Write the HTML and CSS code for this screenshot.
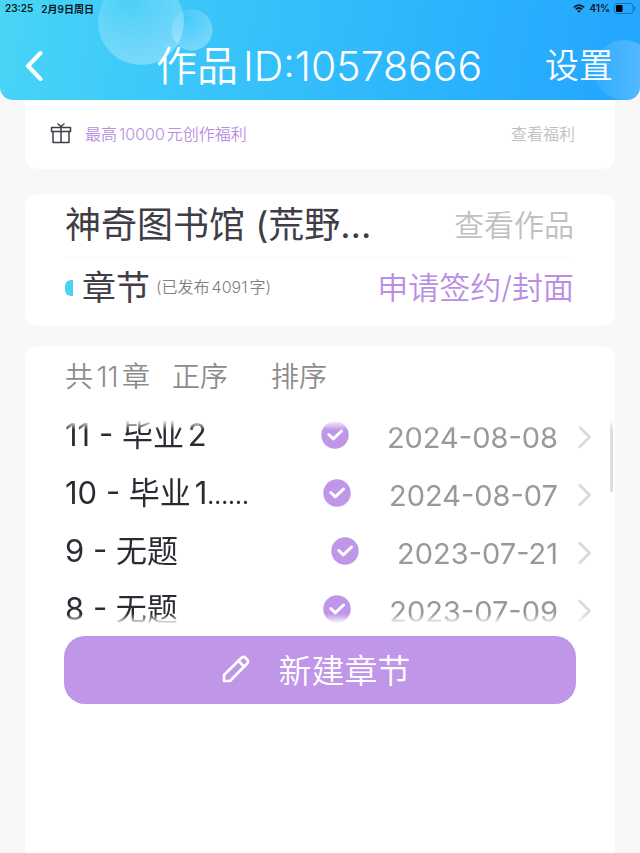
FILE: index.html
```html
<!DOCTYPE html>
<html lang="zh-CN">
<head>
<meta charset="utf-8">
<meta name="viewport" content="width=device-width, initial-scale=1">
<title>作品ID:10578666</title>
<link rel="stylesheet" href="styles.css">
</head>
<body>
<svg class="defs" aria-hidden="true">
  <symbol id="check" viewBox="0 0 28 28"><circle cx="14" cy="14" r="13.7" fill="#bf96e8"/><path d="M7.800 13.500l4.500 4.300 8.200-7.800" fill="none" stroke="#fff" stroke-width="3" stroke-linecap="round" stroke-linejoin="round"/></symbol>
  <symbol id="chevron" viewBox="0 0 14 24"><path d="M1 1.500L11.500 12 1 22.500" fill="none" stroke="#dadada" stroke-width="2.800" stroke-linejoin="round"/></symbol>
</svg>
<header class="top">
  <svg class="bubbles bubbles-left" viewBox="0 0 116 66" aria-hidden="true">
    <defs>
      <radialGradient id="b1" cx=".35" cy=".2" r=".85"><stop offset="0" stop-color="#fff" stop-opacity=".06"/><stop offset="1" stop-color="#fff" stop-opacity=".32"/></radialGradient>
    </defs>
    <circle cx="43" cy="22" r="43" fill="url(#b1)"/><circle cx="94" cy="30" r="20.500" fill="url(#b1)"/>
  </svg>
  <svg class="bubbles bubbles-right" viewBox="0 0 46 60" aria-hidden="true">
    <defs><linearGradient id="b2" x2="1" y2="0"><stop offset="0" stop-color="#fff" stop-opacity=".06"/><stop offset="1" stop-color="#fff" stop-opacity=".26"/></linearGradient></defs>
    <circle cx="30" cy="30" r="30" fill="url(#b2)"/>
  </svg>
  <div class="status">
    <span>23:25</span><span>2月9日周日</span>
    <svg class="wifi" viewBox="0 0 12 9" aria-label="Wi-Fi"><path d="M.800 3.400Q6-1.200 11.200 3.400M2.700 5.400Q6 2.600 9.300 5.400" fill="none" stroke="#0b1820" stroke-width="1.700"/><path d="M4.200 6.900Q6 5.600 7.800 6.900L6 8.800z" fill="#0b1820"/></svg>
    <span class="percent">41%</span>
    <svg class="battery" viewBox="0 0 22 11" aria-label="电量"><rect x=".5" y=".5" width="18.500" height="10" rx="2.500" fill="none" stroke="#1765a0" stroke-opacity=".75"/><rect x="2" y="2" width="6.500" height="7" rx="1" fill="#000"/><path d="M20.500 4v3" stroke="#1765a0" stroke-linecap="round"/></svg>
  </div>
  <nav class="bar">
    <button class="back" type="button" aria-label="返回"><svg viewBox="0 0 18 32"><path d="M15.500 3L3 16l12.500 13" fill="none" stroke="#fff" stroke-width="4" stroke-linecap="round" stroke-linejoin="round"/></svg></button>
    <h1>作品ID:10578666</h1>
    <button class="settings" type="button">设置</button>
  </nav>
</header>
<main>
  <section class="card benefit">
    <svg class="gift" viewBox="0 0 22 22" fill="none" stroke="#3f3e46" stroke-width="1.500" stroke-linejoin="round" stroke-linecap="round" aria-hidden="true"><rect x="1.500" y="5.500" width="19" height="4"/><path d="M3 9.500v11h16v-11M11 5.500v15M8 2L11 4.500l3-2.500"/></svg>
    <span class="benefit-text">最高10000元创作福利</span>
    <a class="more" href="#benefit">查看福利</a>
  </section>
  <section class="card work">
    <div class="work-row">
      <h2 class="book">神奇图书馆 (荒野…</h2>
      <a class="view" href="#work">查看作品</a>
    </div>
    <div class="work-row second">
      <i class="mark"></i>
      <h2>章节</h2>
      <span class="words">(已发布4091字)</span>
      <a class="apply" href="#apply">申请签约/封面</a>
    </div>
  </section>
  <section class="card chapters">
    <div class="sort">
      <span>共11章</span>
      <button class="order" type="button">正序</button>
      <button type="button">排序</button>
    </div>
    <div class="viewport">
      <ol>
        <li><a href="#c11"><span class="name">11 - 毕业2</span><svg class="check"><use href="#check"/></svg><time>2024-08-08</time><svg class="chevron"><use href="#chevron"/></svg></a></li>
        <li><a href="#c10"><span class="name">10 - 毕业1<span class="dots">......</span></span><svg class="check"><use href="#check"/></svg><time>2024-08-07</time><svg class="chevron"><use href="#chevron"/></svg></a></li>
        <li><a href="#c9"><span class="name">9 - 无题</span><svg class="check"><use href="#check"/></svg><time>2023-07-21</time><svg class="chevron"><use href="#chevron"/></svg></a></li>
        <li><a href="#c8"><span class="name">8 - 无题</span><svg class="check"><use href="#check"/></svg><time>2023-07-09</time><svg class="chevron"><use href="#chevron"/></svg></a></li>
      </ol>
    </div>
    <button class="create" type="button">
      <svg viewBox="0 0 28 28" fill="none" stroke="#fff" stroke-width="2.600" stroke-linejoin="round" aria-hidden="true"><path d="M2 26v-6L19.500 2.800Q21.500 1 23.500 2.800l1.700 1.700Q27 6.500 25.200 8.500L8 26zM16.500 6l5.500 5.500"/></svg>
      <span>新建章节</span>
    </button>
  </section>
</main>
</body>
</html>
```

FILE: styles.css
```css
* { box-sizing: border-box; }

body {
  margin: 0;
  min-height: 100vh;
  display: flex;
  flex-direction: column;
  background: #f8f8f8;
  color: #3f3e46;
  font-family: Inter, "Noto Sans CJK SC", sans-serif;
  font-weight: 350;
  text-autospace: normal;
}

h1, h2, ol { margin: 0; padding: 0; font-weight: 350; }
ol { list-style: none; }
a { color: inherit; text-decoration: none; }
button { border: 0; padding: 0; background: none; color: inherit; font: inherit; cursor: pointer; }
svg { display: block; flex: none; }
.defs { position: absolute; width: 0; height: 0; }

.top {
  position: relative;
  height: 100px;
  overflow: hidden;
  border-radius: 0 0 13px 13px;
  background: linear-gradient(100deg, #48d5f6 0%, #34bffb 45%, #22a5ff 100%);
  color: #fff;
}
.bubbles { position: absolute; }
.bubbles-left { left: 98px; top: 0; width: 116px; height: 66px; }
.bubbles-right { right: 0; top: 40px; width: 46px; height: 60px; }

.status {
  position: relative;
  display: flex;
  align-items: center;
  gap: 8px;
  height: 16px;
  padding: 0 4px 0 5px;
  color: #0b1820;
  font-size: 10px;
  font-weight: 600;
  text-autospace: no-autospace;
}
.wifi { width: 12px; height: 9px; margin-left: auto; }
.percent { margin: 0 -4px; }
.battery { width: 22px; height: 11px; }

.bar {
  position: relative;
  display: grid;
  grid-template-columns: 1fr auto 1fr;
  align-items: center;
  height: 100px;
  margin-top: -16px;
  padding: 32px 27px 0 25px;
}
.back svg { width: 18px; height: 32px; }
.bar h1 { font-size: 41px; line-height: 48px; white-space: nowrap; }
.settings { justify-self: end; font-size: 34px; line-height: 48px; }

main { flex: 1; display: flex; flex-direction: column; padding: 0 25px; }
.card { border-radius: 13px; background: #fff; }

.benefit {
  display: flex;
  align-items: center;
  gap: 13px;
  height: 69px;
  padding: 0 40px 3px 25px;
  border-radius: 0 0 13px 13px;
  font-size: 16px;
}
.gift { width: 22px; height: 22px; }
.benefit-text { color: #b98ee4; }
.more { margin-left: auto; color: #c0c0c0; }

.work { margin-top: 25px; padding: 0 41px 0 40px; }
.work-row { display: flex; align-items: center; height: 62px; }
.work-row.second { height: 70px; padding-bottom: 8px; border-top: 1px solid #fafafa; }
.work h2 { font-size: 34px; line-height: 48px; font-weight: 400; white-space: nowrap; }
.work .book { font-size: 36px; }
.view, .apply { margin-left: auto; line-height: 40px; white-space: nowrap; }
.view { color: #c0c0c0; font-size: 30px; }
.apply { color: #b98ee4; font-size: 31px; }
.mark { width: 8px; height: 16px; margin-right: 9px; border-radius: 6px 0 0 6px; background: #4bd2f2; }
.words { margin-left: 6px; padding-bottom: 3px; color: #808080; font-size: 16px; }

.chapters { flex: 1; margin-top: 20px; padding: 11px 0 40px; border-radius: 13px 13px 0 0; }
.sort { display: flex; padding: 0 40px; color: #8c8c8c; font-size: 28px; line-height: 40px; }
.order { margin: 0 43px 0 22px; }

.viewport {
  position: relative;
  height: 204px;
  margin-top: 23px;
  overflow: hidden;
  -webkit-mask-image: linear-gradient(transparent, #000 10px, #000 calc(100% - 10px), transparent);
  mask-image: linear-gradient(transparent, #000 10px, #000 calc(100% - 10px), transparent);
}
.viewport::after {
  content: "";
  position: absolute;
  top: 0;
  right: 2px;
  width: 3px;
  height: 72px;
  border-radius: 2px;
  background: #dedede;
}
.viewport ol { margin-top: -14px; }
.viewport a { display: flex; align-items: center; height: 58px; padding: 0 23px 0 40px; }
.name { margin-right: auto; padding-bottom: 5px; color: #2c2b33; font-size: 31px; font-weight: 400; }
.dots { font-size: 24px; }
.check { width: 28px; height: 28px; }
time { margin: 4px 20px 0 38px; color: #999; font-size: 29px; font-weight: 400; }
.chevron { width: 14px; height: 24px; margin-top: 4px; }

.create {
  display: flex;
  align-items: center;
  justify-content: center;
  gap: 29px;
  width: calc(100% - 78px);
  height: 68px;
  margin: 12px 39px 0;
  padding: 0 8px 3px 0;
  border-radius: 21px;
  background: #bf96e8;
  color: #fff;
  font-size: 33px;
}
.create svg { width: 28px; height: 28px; }
```
